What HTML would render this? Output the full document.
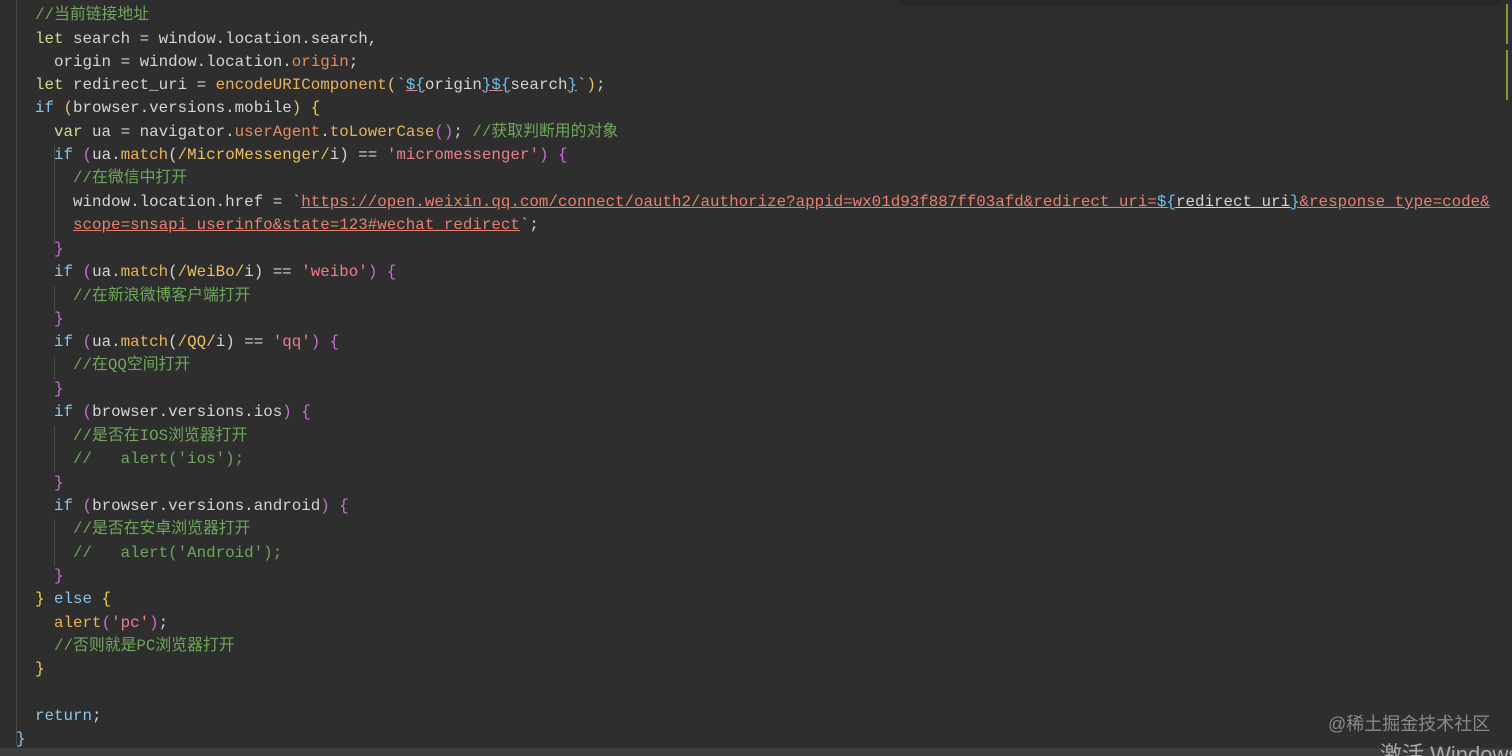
<!DOCTYPE html>
<html><head><meta charset="utf-8"><style>
html,body{margin:0;padding:0;background:#2e2e2e;width:1512px;height:756px;overflow:hidden;position:relative}
.l{position:absolute;left:0;height:23px;line-height:23px;margin-top:2px;white-space:pre;font-family:"Liberation Mono","Noto Sans CJK SC",monospace;font-size:15.85px;color:#d4d4d4}
.k{color:#8cc4ea}.v{color:#d8d88c}.f{color:#e8b25a}.p{color:#e88a5c}.s{color:#e8808a}.u{color:#e8806f;text-decoration:underline;text-decoration-color:#e8806f}.uw{color:#d4d4d4;text-decoration:underline;text-decoration-color:#d4d4d4}.b{color:#6cc0f0;text-decoration:underline;text-decoration-color:#e8806f}
.c{color:#6fa85a}.y{color:#f0d040}.m{color:#cc6cd8}.r{color:#e8c060}
.g{position:absolute;width:1px;background:#4a4a4a}
</style></head><body>
<div class="g" style="left:16px;top:0;height:745px"></div>
<div class="g" style="left:54px;top:145px;height:100px"></div>
<div class="g" style="left:54px;top:286px;height:24px"></div>
<div class="g" style="left:54px;top:356px;height:24px"></div>
<div class="g" style="left:54px;top:426px;height:47px"></div>
<div class="g" style="left:54px;top:519px;height:47px"></div>
<div style="position:absolute;left:900px;top:0;width:600px;height:6px;background:#282828"></div>
<div style="position:absolute;left:1506px;top:4px;width:2px;height:40px;background:#8a9a2a"></div>
<div style="position:absolute;left:1506px;top:50px;width:2px;height:50px;background:#8a9a2a"></div>
<div style="position:absolute;left:0;top:748px;width:1512px;height:8px;background:#3c3c3c"></div>
<div class="l" style="left:35px;top:2px"><span class="c">//当前链接地址</span></div>
<div class="l" style="left:35px;top:26px"><span class="v">let</span> search = window.location.search,</div>
<div class="l" style="left:35px;top:49px">  origin = window.location.<span class="p">origin</span>;</div>
<div class="l" style="left:35px;top:72px"><span class="v">let</span> redirect_uri = <span class="f">encodeURIComponent</span><span class="r">(</span>`<span class="b">${</span>origin<span class="b">}${</span>search<span class="b">}</span>`<span class="r">)</span>;</div>
<div class="l" style="left:35px;top:95px"><span class="k">if</span> <span class="r">(</span>browser.versions.mobile<span class="r">)</span> <span class="y">{</span></div>
<div class="l" style="left:35px;top:119px">  <span class="v">var</span> ua = navigator.<span class="p">userAgent</span>.<span class="f">toLowerCase</span><span class="m">()</span>; <span class="c">//获取判断用的对象</span></div>
<div class="l" style="left:35px;top:142px">  <span class="k">if</span> <span class="m">(</span>ua.<span class="f">match</span>(<span class="r">/MicroMessenger/</span>i) == <span class="s">'micromessenger'</span><span class="m">)</span> <span class="m">{</span></div>
<div class="l" style="left:35px;top:165px">    <span class="c">//在微信中打开</span></div>
<div class="l" style="left:35px;top:189px">    window.location.href = `<span class="u">https://open.weixin.qq.com/connect/oauth2/authorize?appid=wx01d93f887ff03afd&amp;redirect_uri=</span><span class="b">${</span><span class="uw">redirect_uri</span><span class="b">}</span><span class="u">&amp;response_type=code&amp;</span></div>
<div class="l" style="left:35px;top:212px">    <span class="u">scope=snsapi_userinfo&amp;state=123#wechat_redirect</span>`;</div>
<div class="l" style="left:35px;top:236px">  <span class="m">}</span></div>
<div class="l" style="left:35px;top:259px">  <span class="k">if</span> <span class="m">(</span>ua.<span class="f">match</span>(<span class="r">/WeiBo/</span>i) == <span class="s">'weibo'</span><span class="m">)</span> <span class="m">{</span></div>
<div class="l" style="left:35px;top:283px">    <span class="c">//在新浪微博客户端打开</span></div>
<div class="l" style="left:35px;top:306px">  <span class="m">}</span></div>
<div class="l" style="left:35px;top:329px">  <span class="k">if</span> <span class="m">(</span>ua.<span class="f">match</span>(<span class="r">/QQ/</span>i) == <span class="s">'qq'</span><span class="m">)</span> <span class="m">{</span></div>
<div class="l" style="left:35px;top:352px">    <span class="c">//在QQ空间打开</span></div>
<div class="l" style="left:35px;top:376px">  <span class="m">}</span></div>
<div class="l" style="left:35px;top:399px">  <span class="k">if</span> <span class="m">(</span>browser.versions.ios<span class="m">)</span> <span class="m">{</span></div>
<div class="l" style="left:35px;top:423px">    <span class="c">//是否在IOS浏览器打开</span></div>
<div class="l" style="left:35px;top:446px">    <span class="c">//   alert('ios');</span></div>
<div class="l" style="left:35px;top:470px">  <span class="m">}</span></div>
<div class="l" style="left:35px;top:493px">  <span class="k">if</span> <span class="m">(</span>browser.versions.android<span class="m">)</span> <span class="m">{</span></div>
<div class="l" style="left:35px;top:516px">    <span class="c">//是否在安卓浏览器打开</span></div>
<div class="l" style="left:35px;top:540px">    <span class="c">//   alert('Android');</span></div>
<div class="l" style="left:35px;top:563px">  <span class="m">}</span></div>
<div class="l" style="left:35px;top:586px"><span class="y">}</span> <span class="k">else</span> <span class="y">{</span></div>
<div class="l" style="left:35px;top:610px">  <span class="f">alert</span><span class="m">(</span><span class="s">'pc'</span><span class="m">)</span>;</div>
<div class="l" style="left:35px;top:633px">  <span class="c">//否则就是PC浏览器打开</span></div>
<div class="l" style="left:35px;top:656px"><span class="y">}</span></div>
<div class="l" style="left:35px;top:703px"><span class="k">return</span>;</div>
<div class="l" style="left:16px;top:726px"><span class="k">}</span></div>
<div style="position:absolute;left:1328px;top:710px;font-family:'Liberation Sans','Noto Sans CJK SC',sans-serif;font-size:18px;color:#8a8a8a">@稀土掘金技术社区</div>
<div style="position:absolute;left:1380px;top:742px;width:132px;height:14px;overflow:hidden;font-family:'Liberation Sans','Noto Sans CJK SC',sans-serif;font-size:22px;line-height:26px;color:#aaa;white-space:nowrap">激活 Windows</div>
</body></html>
